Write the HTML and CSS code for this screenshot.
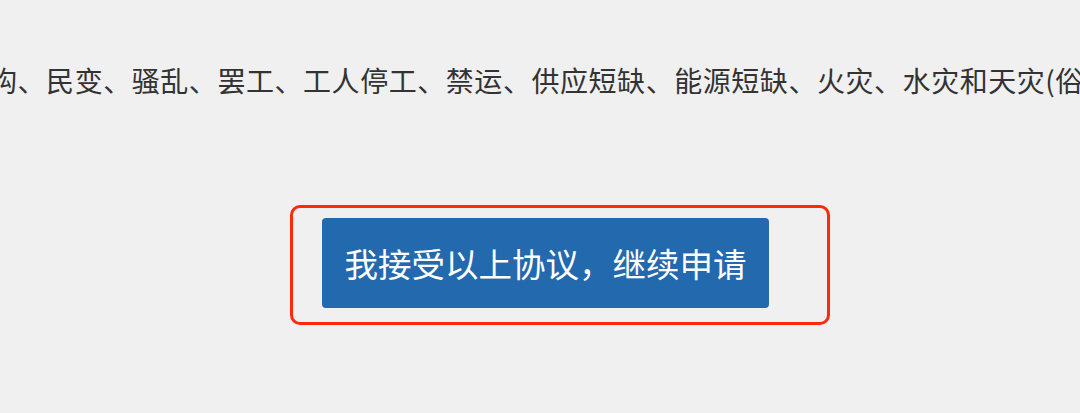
FILE: index.html
```html
<!DOCTYPE html>
<html lang="zh-CN">
<head>
<meta charset="utf-8">
<title>协议</title>
<link rel="stylesheet" href="styles.css">
</head>
<body>
<div class="page">
  <p class="clause">构、民变、骚乱、罢工、工人停工、禁运、供应短缺、能源短缺、火灾、水灾和天灾(俗</p>
  <div class="highlight">
    <button class="accept" type="button">我接受以上协议，继续申请</button>
  </div>
</div>
</body>
</html>
```
FILE: styles.css
```css
html, body {
  margin: 0;
  padding: 0;
  background: #f0f0f0;
}
body {
  width: 1080px;
  height: 413px;
  overflow: hidden;
  font-family: "Noto Sans CJK SC", "Noto Sans", sans-serif;
}
.page {
  padding-top: 66px;
}
.clause {
  margin: 0;
  font-size: 28px;
  line-height: 28px;
  letter-spacing: 0.55px;
  color: #333333;
  white-space: nowrap;
  text-indent: -11px;
}
.highlight {
  display: inline-flex;
  margin: 111px 0 0 290px;
  padding: 10px 58px 14px 29px;
  border: 3px solid #ff2a0a;
  border-radius: 10px;
}
.accept {
  width: 447px;
  height: 90px;
  padding: 0;
  border: 0;
  border-radius: 4px;
  background: #2369ad;
  color: #ffffff;
  font-family: "Noto Sans CJK SC", "Noto Sans", sans-serif;
  font-size: 33.5px;
  line-height: 90px;
  text-align: center;
}
```
